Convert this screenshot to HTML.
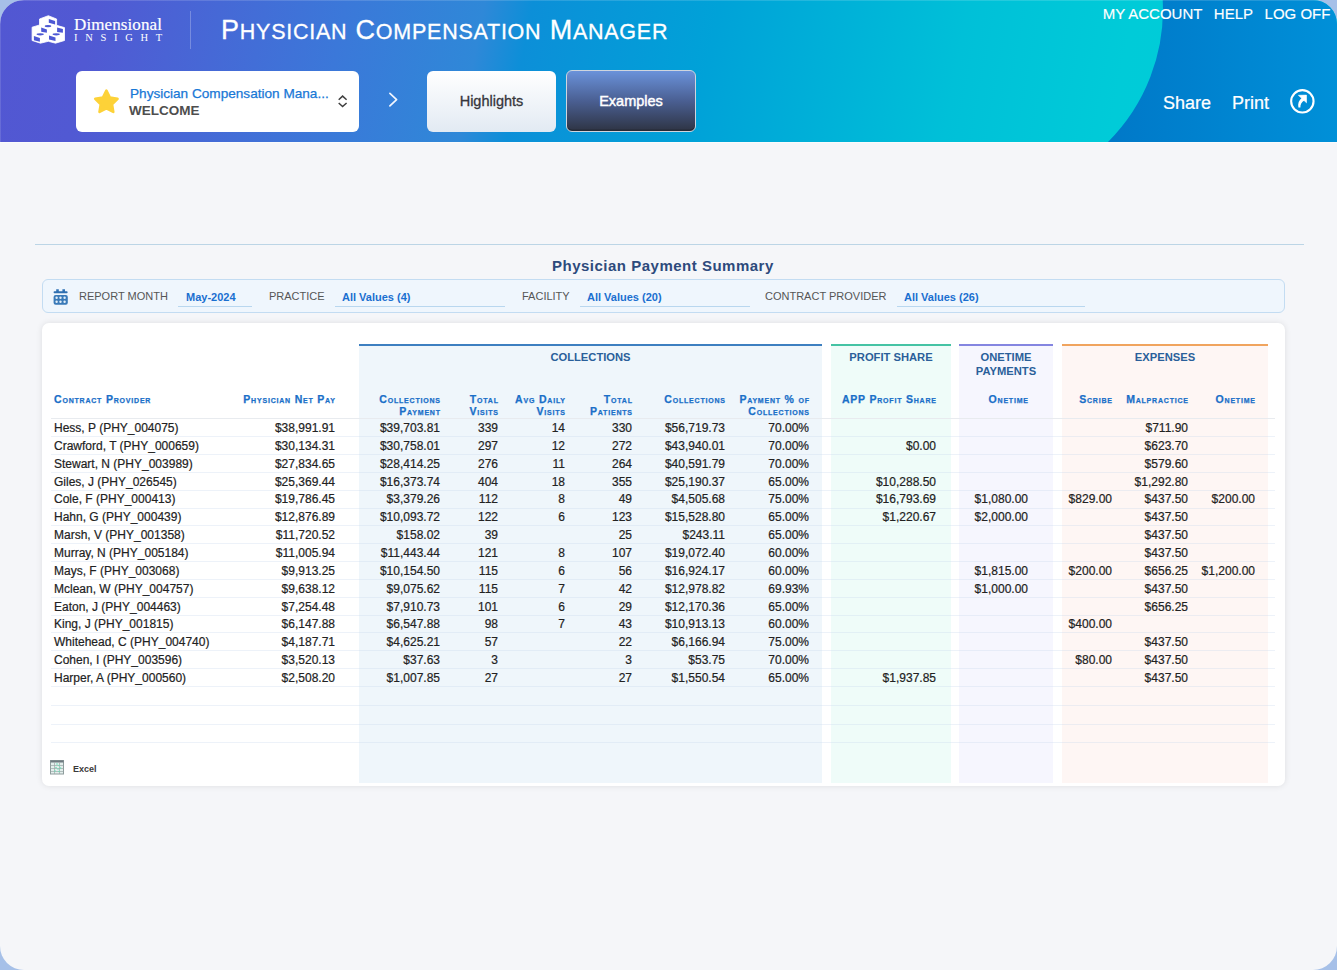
<!DOCTYPE html>
<html><head><meta charset="utf-8">
<style>
*{margin:0;padding:0;box-sizing:border-box}
html,body{width:1337px;height:970px;overflow:hidden;background:#a6c0e8;font-family:"Liberation Sans",sans-serif}
#page{position:absolute;left:0;top:0;width:1337px;height:970px;border-radius:24px;overflow:hidden;background:#f5f6f9}
.abs{position:absolute;white-space:nowrap}
#hdr{position:absolute;left:0;top:0;width:1337px;height:142px}
.tl{position:absolute;color:#fff;font-size:15px;top:5px;line-height:18px;-webkit-text-stroke:0.15px #fff}
.sc{font-variant:small-caps}
.ttl{font-size:27px;color:#fff;line-height:32px;letter-spacing:0.75px;-webkit-text-stroke:0.3px #fff}
.ttl s{text-decoration:none;font-size:21.5px}
.hd{position:absolute;font-weight:bold;font-variant:small-caps;color:#1a6fc8;font-size:10.5px;line-height:11.5px;text-align:right;white-space:nowrap;letter-spacing:0.8px;-webkit-text-stroke:0.25px #1a6fc8;margin-right:-0.8px}
.sec{position:absolute;font-weight:bold;color:#2a5f9a;font-size:11.2px;line-height:13.6px;text-align:center;white-space:nowrap}
.c{position:absolute;font-size:12px;color:#222;white-space:nowrap;line-height:14px;-webkit-text-stroke:0.2px #222}
.r{text-align:right}
.rl{position:absolute;left:51px;width:1224px;height:1px;background:rgba(195,212,235,0.3)}
.flab{position:absolute;top:290px;font-size:11px;color:#555;line-height:13px}
.fval{position:absolute;top:291px;font-size:11px;font-weight:bold;color:#1a6fd0;line-height:13px}
.fline{position:absolute;top:306px;height:1px;background:#b9d7ef}
</style></head><body>
<div id="page">

<svg id="hdr" width="1337" height="142" viewBox="0 0 1337 142">
<defs>
<linearGradient id="g1" gradientUnits="userSpaceOnUse" x1="0" y1="0" x2="1337" y2="254">
<stop offset="0" stop-color="#5257d2"/>
<stop offset="0.07" stop-color="#5159d3"/>
<stop offset="0.25" stop-color="#3b78d9"/>
<stop offset="0.35" stop-color="#2f88d8"/>
<stop offset="0.385" stop-color="#0c8fd8"/>
<stop offset="0.52" stop-color="#00a2d8"/>
<stop offset="0.70" stop-color="#00c0d8"/>
<stop offset="0.82" stop-color="#00cbd8"/>
<stop offset="1" stop-color="#00d0d8"/>
</linearGradient>
<linearGradient id="g2" x1="0" y1="0" x2="1" y2="0">
<stop offset="0" stop-color="#0078c8"/>
<stop offset="1" stop-color="#0090d8"/>
</linearGradient>
</defs>
<rect x="0" y="0" width="1337" height="142" fill="url(#g1)"/>
<path d="M1337 0 L1162.7 0 A187.5 187.5 0 0 1 1108 142 L1337 142 Z" fill="url(#g2)"/>
<rect x="0" y="0" width="1337" height="1" fill="rgba(255,255,255,0.14)"/>
<rect x="0" y="0" width="1" height="142" fill="rgba(255,255,255,0.12)"/>
</svg>

<svg class="abs" style="left:28px;top:12px" width="42" height="36" viewBox="0 0 42 36">
<path d="M11.5 7 L20.3 3.7 L28.6 7 L28.6 13.3 L36.5 15.6 L36.5 28.5 L27.5 31.2 L20.3 29.3 L12.5 31.2 L4.1 28.5 L4.1 15.2 L11.5 13 Z" fill="#fff" stroke="#fff" stroke-width="0.8" stroke-linejoin="round"/>
<g fill="#4d58d4">
<path d="M20.8 6.9 L27.1 8.9 L27.1 12.4 L20.8 10.8 Z"/>
<ellipse cx="20" cy="14.1" rx="3.3" ry="1.2"/>
<path d="M13.2 15.6 L18.9 17.4 L18.9 20.8 L13.2 19.7 Z"/>
<path d="M29.1 15.6 L34.9 17.1 L34.9 20.8 L29.1 20 Z"/>
<ellipse cx="12.2" cy="22.3" rx="3.6" ry="1.1"/>
<ellipse cx="28.2" cy="22.3" rx="3.6" ry="1.1"/>
<path d="M5.9 24.1 L11.9 26 L11.9 29.7 L5.9 28.2 Z"/>
<path d="M21 23.4 L27.5 25.6 L27.5 28.9 L21 27.5 Z"/>
</g>
</svg>
<div class="abs" style="left:74px;top:14.8px;font-family:'Liberation Serif',serif;font-size:17px;color:#fff;line-height:20px;letter-spacing:0.1px;-webkit-text-stroke:0.2px #fff">Dimensional</div>
<div class="abs" style="left:74px;top:31.8px;font-family:'Liberation Serif',serif;font-size:10.5px;color:#fff;line-height:12px;letter-spacing:7.7px">INSIGHT</div>
<div class="abs" style="left:190px;top:11px;width:1px;height:38px;background:rgba(255,255,255,0.25)"></div>
<div class="abs ttl" style="left:221px;top:14px">P<s>HYSICIAN</s> C<s>OMPENSATION</s> M<s>ANAGER</s></div>

<div class="tl" style="left:1102.7px">MY ACCOUNT</div>
<div class="tl" style="left:1213.8px">HELP</div>
<div class="tl" style="left:1264.6px">LOG OFF</div>
<div class="abs" style="left:1163px;top:91.5px;font-size:18px;color:#fff;line-height:22px;-webkit-text-stroke:0.2px #fff">Share</div>
<div class="abs" style="left:1232px;top:91.5px;font-size:18px;color:#fff;line-height:22px;-webkit-text-stroke:0.2px #fff">Print</div>
<svg class="abs" style="left:1285px;top:85px" width="35" height="33" viewBox="0 0 35 33">
<circle cx="17.35" cy="16.35" r="11.2" fill="none" stroke="#fff" stroke-width="2.1"/>
<path d="M13.4 10.3 L21.5 10.1 L21.5 17.8 Z" fill="#fff" stroke="#fff" stroke-width="0.6" stroke-linejoin="round"/>
<path d="M17.2 12.6 C13.8 15.2 12.6 18.8 13.4 22.6 L15.4 22.4 C15.2 19.6 16.4 17 19.6 15.2 Z" fill="#fff"/>
</svg>

<div class="abs" style="left:76px;top:70.5px;width:283px;height:61.5px;background:#fff;border-radius:6px"></div>
<svg class="abs" style="left:80px;top:80px" width="50" height="40" viewBox="0 0 50 40">
<path d="M26.40 10.70 L29.87 17.63 L37.53 18.78 L32.01 24.22 L33.28 31.87 L26.40 28.30 L19.52 31.87 L20.79 24.22 L15.27 18.78 L22.93 17.63 Z" fill="#fdd238" stroke="#fdd238" stroke-width="2.6" stroke-linejoin="round"/>
</svg>
<div class="abs" style="left:130px;top:85.6px;font-size:13.6px;color:#1878d6;-webkit-text-stroke:0.25px #1878d6;line-height:16px">Physician Compensation Mana...</div>
<div class="abs" style="left:129px;top:103px;font-size:13.5px;font-weight:bold;color:#4e4e4e;line-height:16px">WELCOME</div>
<svg class="abs" style="left:330px;top:85px" width="80" height="35" viewBox="0 0 80 35">
<path d="M8.7 14.7 L12.6 11.1 L16.6 14.7 M8.7 18 L12.6 21.6 L16.6 18" fill="none" stroke="#3f3f3f" stroke-width="1.5"/>
<path d="M59.9 8.3 L66.6 14.6 L59.9 20.9" fill="none" stroke="#f2f6ff" stroke-width="1.7" stroke-linecap="round" stroke-linejoin="round"/>
</svg>
<div class="abs" style="left:427px;top:70.5px;width:129px;height:61.5px;border-radius:6px;background:linear-gradient(#ffffff,#e2eaf3);"></div>
<div class="abs" style="left:427px;top:92px;width:129px;text-align:center;font-size:14.5px;color:#36363c;line-height:18px;-webkit-text-stroke:0.3px #36363c">Highlights</div>
<div class="abs" style="left:566px;top:70px;width:130px;height:62px;border-radius:6px;background:linear-gradient(#6a92da,#4a5f92 50%,#2e3444);border:1.5px solid #cfd5de;box-shadow:inset 0 -1.5px 0 #262a36"></div>
<div class="abs" style="left:566px;top:92px;width:130px;text-align:center;font-size:14.5px;color:#fff;line-height:18px;-webkit-text-stroke:0.45px #fff">Examples</div>

<div class="abs" style="left:0;top:142px;width:1337px;height:1px;background:#fafbfc"></div>
<div class="abs" style="left:35px;top:244px;width:1269px;height:1px;background:#bcd5e6"></div>
<div class="abs" style="left:552px;top:257px;font-size:15px;font-weight:bold;color:#2d4a7c;line-height:17px;letter-spacing:0.5px">Physician Payment Summary</div>
<div class="abs" style="left:42px;top:279px;width:1243px;height:34px;background:#eff6fd;border:1px solid #c3dcf2;border-radius:6px"></div>
<svg class="abs" style="left:48px;top:283px" width="30" height="27" viewBox="0 0 30 27">
<path d="M8.2 6.2 h2.6 v3 h-2.6 Z M14.4 6.2 h2.6 v3 h-2.6 Z" fill="#3274b6"/>
<rect x="5.6" y="8.2" width="14" height="2" rx="0.8" fill="#2f6fb0"/>
<rect x="5.6" y="11.9" width="14.2" height="9.8" rx="2" fill="#3a7ab8"/>
<g fill="#e2eef8"><circle cx="8.6" cy="14.8" r="1.2"/><circle cx="12.5" cy="14.8" r="1.2"/><circle cx="16.6" cy="14.8" r="1.2"/>
<circle cx="8.6" cy="18.7" r="1.2"/><circle cx="12.5" cy="18.7" r="1.2"/><circle cx="16.6" cy="18.7" r="1.2"/></g>
</svg>
<div class="flab" style="left:79px">REPORT MONTH</div>
<div class="fval" style="left:186px">May-2024</div>
<div class="fline" style="left:178px;width:74px"></div>
<div class="flab" style="left:269px">PRACTICE</div>
<div class="fval" style="left:342px">All Values (4)</div>
<div class="fline" style="left:335px;width:170px"></div>
<div class="flab" style="left:522px">FACILITY</div>
<div class="fval" style="left:587px">All Values (20)</div>
<div class="fline" style="left:580px;width:170px"></div>
<div class="flab" style="left:765px">CONTRACT PROVIDER</div>
<div class="fval" style="left:904px">All Values (26)</div>
<div class="fline" style="left:897px;width:188px"></div>

<div class="abs" style="left:42px;top:323px;width:1243px;height:463px;background:#fff;border-radius:7px;box-shadow:0 0 6px rgba(0,0,0,0.10)"></div>
<div class="abs" style="left:359px;top:344px;width:463px;height:439px;background:#eff6fb;border-top:2px solid #3d7fc0"></div>
<div class="abs" style="left:831px;top:344px;width:120px;height:439px;background:#effcf9;border-top:2px solid #45c3a4"></div>
<div class="abs" style="left:959px;top:344px;width:94px;height:439px;background:#f6f6fe;border-top:2px solid #8485e0"></div>
<div class="abs" style="left:1062px;top:344px;width:206px;height:439px;background:#fef6f4;border-top:2px solid #f0a45e"></div>
<div class="sec" style="left:359px;top:351.2px;width:463px">COLLECTIONS</div>
<div class="sec" style="left:831px;top:351.2px;width:120px">PROFIT SHARE</div>
<div class="sec" style="left:959px;top:351.2px;width:94px">ONETIME<br>PAYMENTS</div>
<div class="sec" style="left:1062px;top:351.2px;width:206px">EXPENSES</div>
<div class="hd" style="left:54px;top:394px;text-align:left">Contract Provider</div>

<div class="hd" style="right:1002px;top:394px">Physician Net Pay</div>
<div class="hd" style="right:897px;top:394px">Collections<br>Payment</div>
<div class="hd" style="right:839px;top:394px">Total<br>Visits</div>
<div class="hd" style="right:772px;top:394px">Avg Daily<br>Visits</div>
<div class="hd" style="right:705px;top:394px">Total<br>Patients</div>
<div class="hd" style="right:612px;top:394px">Collections</div>
<div class="hd" style="right:528px;top:394px">Payment % of<br>Collections</div>
<div class="hd" style="right:401px;top:394px">APP Profit Share</div>
<div class="hd" style="right:309px;top:394px">Onetime</div>
<div class="hd" style="right:225px;top:394px">Scribe</div>
<div class="hd" style="right:149px;top:394px">Malpractice</div>
<div class="hd" style="right:82px;top:394px">Onetime</div>
<div class="rl" style="top:418.40px;background:#e8ebef"></div>
<div class="rl" style="top:436.24px"></div>
<div class="rl" style="top:454.08px"></div>
<div class="rl" style="top:471.92px"></div>
<div class="rl" style="top:489.76px"></div>
<div class="rl" style="top:507.60px"></div>
<div class="rl" style="top:525.44px"></div>
<div class="rl" style="top:543.28px"></div>
<div class="rl" style="top:561.12px"></div>
<div class="rl" style="top:578.96px"></div>
<div class="rl" style="top:596.80px"></div>
<div class="rl" style="top:614.64px"></div>
<div class="rl" style="top:632.48px"></div>
<div class="rl" style="top:650.32px"></div>
<div class="rl" style="top:668.16px"></div>
<div class="rl" style="top:686.00px"></div>
<div class="rl" style="top:704.70px"></div>
<div class="rl" style="top:723.70px"></div>
<div class="rl" style="top:742.30px"></div>
<div class="c" style="left:54px;top:421.10px">Hess, P (PHY_004075)</div>
<div class="c r" style="right:1002px;top:421.10px">$38,991.91</div>
<div class="c r" style="right:897px;top:421.10px">$39,703.81</div>
<div class="c r" style="right:839px;top:421.10px">339</div>
<div class="c r" style="right:772px;top:421.10px">14</div>
<div class="c r" style="right:705px;top:421.10px">330</div>
<div class="c r" style="right:612px;top:421.10px">$56,719.73</div>
<div class="c r" style="right:528px;top:421.10px">70.00%</div>
<div class="c r" style="right:149px;top:421.10px">$711.90</div>
<div class="c" style="left:54px;top:438.94px">Crawford, T (PHY_000659)</div>
<div class="c r" style="right:1002px;top:438.94px">$30,134.31</div>
<div class="c r" style="right:897px;top:438.94px">$30,758.01</div>
<div class="c r" style="right:839px;top:438.94px">297</div>
<div class="c r" style="right:772px;top:438.94px">12</div>
<div class="c r" style="right:705px;top:438.94px">272</div>
<div class="c r" style="right:612px;top:438.94px">$43,940.01</div>
<div class="c r" style="right:528px;top:438.94px">70.00%</div>
<div class="c r" style="right:401px;top:438.94px">$0.00</div>
<div class="c r" style="right:149px;top:438.94px">$623.70</div>
<div class="c" style="left:54px;top:456.78px">Stewart, N (PHY_003989)</div>
<div class="c r" style="right:1002px;top:456.78px">$27,834.65</div>
<div class="c r" style="right:897px;top:456.78px">$28,414.25</div>
<div class="c r" style="right:839px;top:456.78px">276</div>
<div class="c r" style="right:772px;top:456.78px">11</div>
<div class="c r" style="right:705px;top:456.78px">264</div>
<div class="c r" style="right:612px;top:456.78px">$40,591.79</div>
<div class="c r" style="right:528px;top:456.78px">70.00%</div>
<div class="c r" style="right:149px;top:456.78px">$579.60</div>
<div class="c" style="left:54px;top:474.62px">Giles, J (PHY_026545)</div>
<div class="c r" style="right:1002px;top:474.62px">$25,369.44</div>
<div class="c r" style="right:897px;top:474.62px">$16,373.74</div>
<div class="c r" style="right:839px;top:474.62px">404</div>
<div class="c r" style="right:772px;top:474.62px">18</div>
<div class="c r" style="right:705px;top:474.62px">355</div>
<div class="c r" style="right:612px;top:474.62px">$25,190.37</div>
<div class="c r" style="right:528px;top:474.62px">65.00%</div>
<div class="c r" style="right:401px;top:474.62px">$10,288.50</div>
<div class="c r" style="right:149px;top:474.62px">$1,292.80</div>
<div class="c" style="left:54px;top:492.46px">Cole, F (PHY_000413)</div>
<div class="c r" style="right:1002px;top:492.46px">$19,786.45</div>
<div class="c r" style="right:897px;top:492.46px">$3,379.26</div>
<div class="c r" style="right:839px;top:492.46px">112</div>
<div class="c r" style="right:772px;top:492.46px">8</div>
<div class="c r" style="right:705px;top:492.46px">49</div>
<div class="c r" style="right:612px;top:492.46px">$4,505.68</div>
<div class="c r" style="right:528px;top:492.46px">75.00%</div>
<div class="c r" style="right:401px;top:492.46px">$16,793.69</div>
<div class="c r" style="right:309px;top:492.46px">$1,080.00</div>
<div class="c r" style="right:225px;top:492.46px">$829.00</div>
<div class="c r" style="right:149px;top:492.46px">$437.50</div>
<div class="c r" style="right:82px;top:492.46px">$200.00</div>
<div class="c" style="left:54px;top:510.30px">Hahn, G (PHY_000439)</div>
<div class="c r" style="right:1002px;top:510.30px">$12,876.89</div>
<div class="c r" style="right:897px;top:510.30px">$10,093.72</div>
<div class="c r" style="right:839px;top:510.30px">122</div>
<div class="c r" style="right:772px;top:510.30px">6</div>
<div class="c r" style="right:705px;top:510.30px">123</div>
<div class="c r" style="right:612px;top:510.30px">$15,528.80</div>
<div class="c r" style="right:528px;top:510.30px">65.00%</div>
<div class="c r" style="right:401px;top:510.30px">$1,220.67</div>
<div class="c r" style="right:309px;top:510.30px">$2,000.00</div>
<div class="c r" style="right:149px;top:510.30px">$437.50</div>
<div class="c" style="left:54px;top:528.14px">Marsh, V (PHY_001358)</div>
<div class="c r" style="right:1002px;top:528.14px">$11,720.52</div>
<div class="c r" style="right:897px;top:528.14px">$158.02</div>
<div class="c r" style="right:839px;top:528.14px">39</div>
<div class="c r" style="right:705px;top:528.14px">25</div>
<div class="c r" style="right:612px;top:528.14px">$243.11</div>
<div class="c r" style="right:528px;top:528.14px">65.00%</div>
<div class="c r" style="right:149px;top:528.14px">$437.50</div>
<div class="c" style="left:54px;top:545.98px">Murray, N (PHY_005184)</div>
<div class="c r" style="right:1002px;top:545.98px">$11,005.94</div>
<div class="c r" style="right:897px;top:545.98px">$11,443.44</div>
<div class="c r" style="right:839px;top:545.98px">121</div>
<div class="c r" style="right:772px;top:545.98px">8</div>
<div class="c r" style="right:705px;top:545.98px">107</div>
<div class="c r" style="right:612px;top:545.98px">$19,072.40</div>
<div class="c r" style="right:528px;top:545.98px">60.00%</div>
<div class="c r" style="right:149px;top:545.98px">$437.50</div>
<div class="c" style="left:54px;top:563.82px">Mays, F (PHY_003068)</div>
<div class="c r" style="right:1002px;top:563.82px">$9,913.25</div>
<div class="c r" style="right:897px;top:563.82px">$10,154.50</div>
<div class="c r" style="right:839px;top:563.82px">115</div>
<div class="c r" style="right:772px;top:563.82px">6</div>
<div class="c r" style="right:705px;top:563.82px">56</div>
<div class="c r" style="right:612px;top:563.82px">$16,924.17</div>
<div class="c r" style="right:528px;top:563.82px">60.00%</div>
<div class="c r" style="right:309px;top:563.82px">$1,815.00</div>
<div class="c r" style="right:225px;top:563.82px">$200.00</div>
<div class="c r" style="right:149px;top:563.82px">$656.25</div>
<div class="c r" style="right:82px;top:563.82px">$1,200.00</div>
<div class="c" style="left:54px;top:581.66px">Mclean, W (PHY_004757)</div>
<div class="c r" style="right:1002px;top:581.66px">$9,638.12</div>
<div class="c r" style="right:897px;top:581.66px">$9,075.62</div>
<div class="c r" style="right:839px;top:581.66px">115</div>
<div class="c r" style="right:772px;top:581.66px">7</div>
<div class="c r" style="right:705px;top:581.66px">42</div>
<div class="c r" style="right:612px;top:581.66px">$12,978.82</div>
<div class="c r" style="right:528px;top:581.66px">69.93%</div>
<div class="c r" style="right:309px;top:581.66px">$1,000.00</div>
<div class="c r" style="right:149px;top:581.66px">$437.50</div>
<div class="c" style="left:54px;top:599.50px">Eaton, J (PHY_004463)</div>
<div class="c r" style="right:1002px;top:599.50px">$7,254.48</div>
<div class="c r" style="right:897px;top:599.50px">$7,910.73</div>
<div class="c r" style="right:839px;top:599.50px">101</div>
<div class="c r" style="right:772px;top:599.50px">6</div>
<div class="c r" style="right:705px;top:599.50px">29</div>
<div class="c r" style="right:612px;top:599.50px">$12,170.36</div>
<div class="c r" style="right:528px;top:599.50px">65.00%</div>
<div class="c r" style="right:149px;top:599.50px">$656.25</div>
<div class="c" style="left:54px;top:617.34px">King, J (PHY_001815)</div>
<div class="c r" style="right:1002px;top:617.34px">$6,147.88</div>
<div class="c r" style="right:897px;top:617.34px">$6,547.88</div>
<div class="c r" style="right:839px;top:617.34px">98</div>
<div class="c r" style="right:772px;top:617.34px">7</div>
<div class="c r" style="right:705px;top:617.34px">43</div>
<div class="c r" style="right:612px;top:617.34px">$10,913.13</div>
<div class="c r" style="right:528px;top:617.34px">60.00%</div>
<div class="c r" style="right:225px;top:617.34px">$400.00</div>
<div class="c" style="left:54px;top:635.18px">Whitehead, C (PHY_004740)</div>
<div class="c r" style="right:1002px;top:635.18px">$4,187.71</div>
<div class="c r" style="right:897px;top:635.18px">$4,625.21</div>
<div class="c r" style="right:839px;top:635.18px">57</div>
<div class="c r" style="right:705px;top:635.18px">22</div>
<div class="c r" style="right:612px;top:635.18px">$6,166.94</div>
<div class="c r" style="right:528px;top:635.18px">75.00%</div>
<div class="c r" style="right:149px;top:635.18px">$437.50</div>
<div class="c" style="left:54px;top:653.02px">Cohen, I (PHY_003596)</div>
<div class="c r" style="right:1002px;top:653.02px">$3,520.13</div>
<div class="c r" style="right:897px;top:653.02px">$37.63</div>
<div class="c r" style="right:839px;top:653.02px">3</div>
<div class="c r" style="right:705px;top:653.02px">3</div>
<div class="c r" style="right:612px;top:653.02px">$53.75</div>
<div class="c r" style="right:528px;top:653.02px">70.00%</div>
<div class="c r" style="right:225px;top:653.02px">$80.00</div>
<div class="c r" style="right:149px;top:653.02px">$437.50</div>
<div class="c" style="left:54px;top:670.86px">Harper, A (PHY_000560)</div>
<div class="c r" style="right:1002px;top:670.86px">$2,508.20</div>
<div class="c r" style="right:897px;top:670.86px">$1,007.85</div>
<div class="c r" style="right:839px;top:670.86px">27</div>
<div class="c r" style="right:705px;top:670.86px">27</div>
<div class="c r" style="right:612px;top:670.86px">$1,550.54</div>
<div class="c r" style="right:528px;top:670.86px">65.00%</div>
<div class="c r" style="right:401px;top:670.86px">$1,937.85</div>
<div class="c r" style="right:149px;top:670.86px">$437.50</div>
<svg class="abs" style="left:50px;top:760px" width="14" height="15" viewBox="0 0 14 15">
<rect x="0.5" y="0.5" width="13" height="13.5" fill="#e3eeec" stroke="#8e9c9c" stroke-width="1"/>
<rect x="0.5" y="0.5" width="13" height="2" fill="#6f7a80"/>
<path d="M0.5 5.5 H13.5 M0.5 8.5 H13.5 M0.5 11.5 H13.5 M4.5 2.5 V14 M9.5 2.5 V14" stroke="#9aa8a8" stroke-width="0.7"/>
<g fill="#6fe0b8"><circle cx="7" cy="4" r="0.8"/><circle cx="9" cy="5.5" r="0.8"/><circle cx="6" cy="7.5" r="0.8"/><circle cx="8" cy="9" r="0.8"/><circle cx="10.5" cy="8" r="0.8"/><circle cx="9" cy="11.5" r="0.8"/><circle cx="5" cy="11" r="0.8"/></g>
</svg>
<div class="abs" style="left:73px;top:763.8px;font-size:9px;font-weight:bold;color:#3a3a3a;line-height:11px">Excel</div>

</div></body></html>
